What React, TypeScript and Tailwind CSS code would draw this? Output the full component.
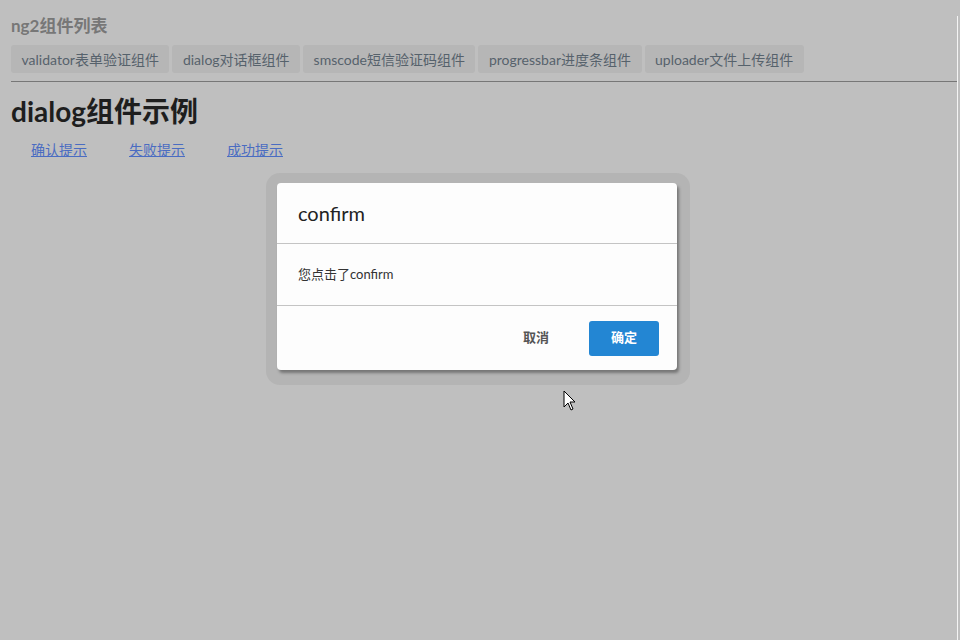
import React from "react";

const tabs = [
  "validator表单验证组件",
  "dialog对话框组件",
  "smscode短信验证码组件",
  "progressbar进度条组件",
  "uploader文件上传组件",
];

const links = ["确认提示", "失败提示", "成功提示"];

export default function App() {
  return (
    <div
      className="relative w-[960px] h-[640px] overflow-hidden bg-[#bfbfbf]"
      style={{ fontFamily: "Lato, 'Noto Sans CJK SC', sans-serif" }}
    >
      {/* PAGE */}
      <div className="w-[957px] pl-[11px] pt-[15px]">
        <div className="text-[17px] font-bold text-[#777777] leading-[22px]">
          ng2组件列表
        </div>

        <div className="flex gap-[3px] mt-[8px]">
          {tabs.map((t) => (
            <div
              key={t}
              className="h-[28px] px-[10.5px] flex items-center rounded-[3px] bg-[#b6b6b6] text-[14px] text-[#56626c]"
            >
              {t}
            </div>
          ))}
        </div>

        <div className="mt-[8px] h-px bg-[#777777]" />

        <h1 className="mt-[11px] text-[28px] font-bold text-[#1e1e1e] leading-[36px]">
          dialog组件示例
        </h1>

        <div className="flex gap-[42px] pl-[20px] mt-[12px]">
          {links.map((l) => (
            <a
              key={l}
              href="#"
              className="text-[14px] leading-[18px] text-[#4a6cc2] underline"
            >
              {l}
            </a>
          ))}
        </div>
      </div>

      {/* right edge strip */}
      <div className="absolute left-[957px] top-[16px] w-px h-[624px] bg-[#f4f4f4]" />

      {/* DIALOG */}
      <div className="absolute left-[266px] top-[173px] rounded-[14px] bg-[#b4b4b4] pt-[10px] pl-[11px] pr-[13px] pb-[15px]">
        <div className="w-[400px] rounded-[4px] bg-[#fdfdfd] shadow-[2px_3px_3px_rgba(0,0,0,0.35)]">
          <div className="h-[61px] px-[21px] flex items-center border-b border-[#c4c4c4] text-[20px] text-[#222222]">
            confirm
          </div>
          <div className="h-[62px] px-[21px] pt-[1px] flex items-center border-b border-[#c4c4c4] text-[13px] text-[#333333]">
            您点击了confirm
          </div>
          <div className="h-[64px] pr-[18px] flex items-center justify-end gap-[18px]">
            <button className="w-[70px] h-[35px] text-[13px] font-bold text-[#555555]">
              取消
            </button>
            <button className="w-[70px] h-[35px] rounded-[3px] bg-[#2386d3] text-[13px] font-bold text-white">
              确定
            </button>
          </div>
        </div>
      </div>

      {/* cursor */}
      <svg
        className="absolute left-[563px] top-[390px]"
        width="14"
        height="22"
        viewBox="0 0 14 22"
      >
        <path
          d="M1 1 L1 17 L5 13 L8 20 L10 19 L7 12 L12 12 Z"
          fill="#ffffff"
          stroke="#000000"
          strokeWidth="1"
          strokeLinejoin="round"
        />
      </svg>
    </div>
  );
}
